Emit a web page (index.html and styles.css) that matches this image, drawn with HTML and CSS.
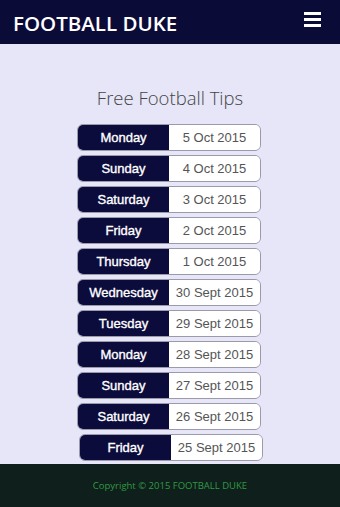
FILE: index.html
```html
<!DOCTYPE html>
<html lang="en">
<head>
<meta charset="utf-8">
<title>Football Duke</title>
<link rel="stylesheet" href="styles.css">
</head>
<body>
<header class="topbar">
  <div class="brand">FOOTBALL DUKE</div>
  <button class="menu" aria-label="Menu">
    <svg width="17" height="15" viewBox="0 0 17 15"><rect x="0" y="0" width="17" height="3" fill="#fff"/><rect x="0" y="6" width="17" height="3" fill="#fff"/><rect x="0" y="12" width="17" height="3" fill="#fff"/></svg>
  </button>
</header>
<main class="content">
  <h1 class="title">Free Football Tips</h1>
  <ul class="tips">
    <li class="tip"><span class="day">Monday</span><span class="date">5 Oct 2015</span></li>
    <li class="tip"><span class="day">Sunday</span><span class="date">4 Oct 2015</span></li>
    <li class="tip"><span class="day">Saturday</span><span class="date">3 Oct 2015</span></li>
    <li class="tip"><span class="day">Friday</span><span class="date">2 Oct 2015</span></li>
    <li class="tip"><span class="day">Thursday</span><span class="date">1 Oct 2015</span></li>
    <li class="tip"><span class="day">Wednesday</span><span class="date">30 Sept 2015</span></li>
    <li class="tip"><span class="day">Tuesday</span><span class="date">29 Sept 2015</span></li>
    <li class="tip"><span class="day">Monday</span><span class="date">28 Sept 2015</span></li>
    <li class="tip"><span class="day">Sunday</span><span class="date">27 Sept 2015</span></li>
    <li class="tip"><span class="day">Saturday</span><span class="date">26 Sept 2015</span></li>
    <li class="tip tip-last"><span class="day">Friday</span><span class="date">25 Sept 2015</span></li>
  </ul>
</main>
<footer class="footer">Copyright © 2015 FOOTBALL DUKE</footer>
</body>
</html>
```
FILE: styles.css
```css
html, body {
  margin: 0;
  padding: 0;
}
body {
  background: #e6e6f8;
  font-family: "Open Sans", "Liberation Sans", sans-serif;
  width: 340px;
  min-height: 507px;
  display: flex;
  flex-direction: column;
}
.topbar {
  height: 44px;
  background: #0b0b38;
  display: flex;
  align-items: center;
  justify-content: space-between;
  padding: 0 19px 0 13px;
  box-sizing: border-box;
}
.brand {
  color: #fff;
  font-family: "Open Sans", sans-serif;
  font-weight: 600;
  font-size: 20.5px;
  line-height: 1;
  padding-top: 2px;
}
.menu {
  background: none;
  border: 0;
  padding: 0;
  margin: 0;
  display: flex;
  align-items: center;
  height: 15px;
  margin-top: -5px;
}
.menu svg {
  display: block;
}
.content {
  flex: 1;
  display: flex;
  flex-direction: column;
  align-items: center;
  padding-top: 40px;
}
.title {
  margin: 0;
  font-family: "Open Sans", sans-serif;
  font-weight: 300;
  font-size: 18.5px;
  line-height: 27px;
  color: #444;
}
.tips {
  list-style: none;
  margin: 13px 0 0;
  padding: 0;
  display: flex;
  flex-direction: column;
  gap: 4px;
}
.tip {
  width: 184px;
  height: 27px;
  box-sizing: border-box;
  display: grid;
  grid-template-columns: 1fr 1fr;
  border: 1px solid #9a9aa8;
  border-radius: 6px;
  overflow: hidden;
  font-family: "Liberation Sans", Arial, sans-serif;
  font-size: 13px;
}
.tip-last {
  margin-left: 2px;
}
.day {
  background: #0c0c3c;
  color: #fff;
  -webkit-text-stroke: 0.35px #fff;
  display: flex;
  align-items: center;
  justify-content: center;
}
.date {
  background: #fff;
  color: #555;
  display: flex;
  align-items: center;
  justify-content: center;
}
.footer {
  height: 43px;
  margin-top: 1px;
  background: #0f1f1c;
  color: #2f9a42;
  font-family: "Open Sans", sans-serif;
  font-size: 9.5px;
  display: flex;
  align-items: center;
  justify-content: center;
}
```
